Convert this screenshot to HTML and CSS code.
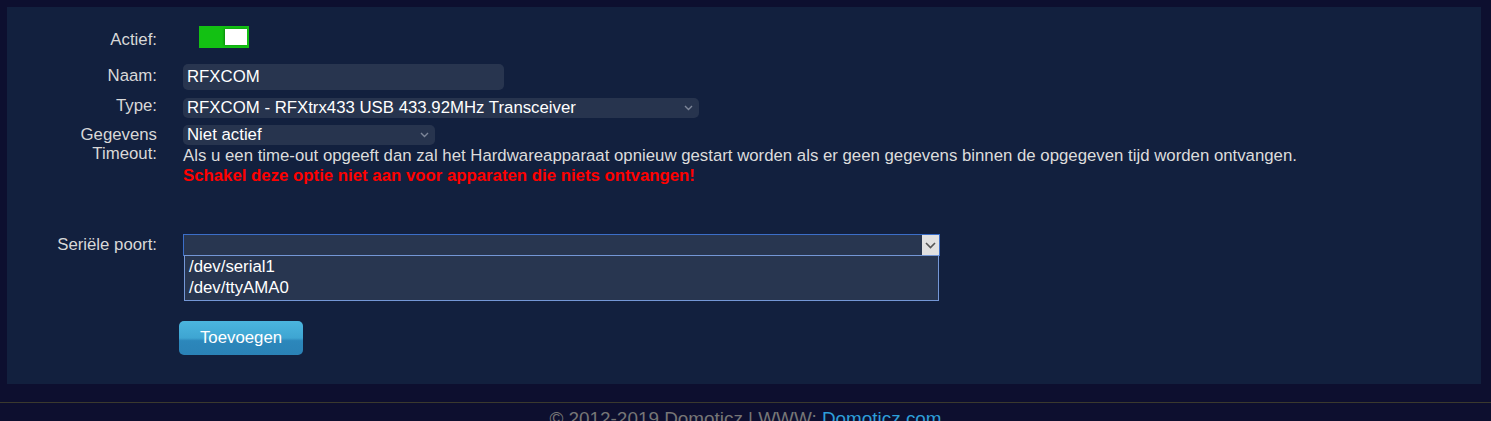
FILE: index.html
```html
<!DOCTYPE html>
<html lang="nl">
<head>
<meta charset="utf-8">
<title>Hardware</title>
<link rel="stylesheet" href="styles.css">
</head>
<body>
<div class="wrap">
  <div class="panel">
    <div class="row row-actief">
      <div class="label">Actief:</div>
      <div class="field"><span class="toggle"><span class="knob"></span></span></div>
    </div>
    <div class="row row-naam">
      <div class="label">Naam:</div>
      <div class="field"><div class="input input-naam">RFXCOM</div></div>
    </div>
    <div class="row row-type">
      <div class="label">Type:</div>
      <div class="field">
        <div class="select select-type"><span>RFXCOM - RFXtrx433 USB 433.92MHz Transceiver</span>
          <svg class="chev" width="9" height="6" viewBox="0 0 9 6"><path d="M1 1l3.5 3.5L8 1" fill="none" stroke="#7d8699" stroke-width="1.4"/></svg>
        </div>
      </div>
    </div>
    <div class="row row-timeout">
      <div class="label">Gegevens<br>Timeout:</div>
      <div class="field">
        <div class="select select-timeout"><span>Niet actief</span>
          <svg class="chev" width="9" height="6" viewBox="0 0 9 6"><path d="M1 1l3.5 3.5L8 1" fill="none" stroke="#7d8699" stroke-width="1.4"/></svg>
        </div>
        <p class="desc">Als u een time-out opgeeft dan zal het Hardwareapparaat opnieuw gestart worden als er geen gegevens binnen de opgegeven tijd worden ontvangen.</p>
        <p class="warn">Schakel deze optie niet aan voor apparaten die niets ontvangen!</p>
      </div>
    </div>
    <div class="row row-serial">
      <div class="label">Seriële poort:</div>
      <div class="field">
        <div class="serial">
          <div class="serial-box">
            <span class="serial-val"></span>
            <span class="serial-btn"><svg width="11" height="7" viewBox="0 0 11 7"><path d="M1 1l4.5 4.5L10 1" fill="none" stroke="#555" stroke-width="1.6"/></svg></span>
          </div>
          <ul class="listbox">
            <li>/dev/serial1</li>
            <li>/dev/ttyAMA0</li>
          </ul>
        </div>
        <button class="btn" type="button">Toevoegen</button>
      </div>
    </div>
  </div>
</div>
<footer class="footer">© 2012-2019 Domoticz | WWW: <a href="#">Domoticz.com</a></footer>
</body>
</html>
```

FILE: styles.css
```css
html, body {
  margin: 0;
  padding: 0;
}
body {
  background: #0d0f2f;
  font-family: "Liberation Sans", Arial, sans-serif;
  font-size: 16.8px;
  color: #dcdcdc;
  height: 421px;
  overflow: hidden;
}
.wrap {
  padding: 7px 10px 0 7px;
}
.panel {
  background: #12203e;
  height: 377px;
  box-sizing: border-box;
  padding-top: 19px;
}
.row {
  display: flex;
  gap: 26px;
}
.label {
  width: 150px;
  flex: none;
  text-align: right;
  color: #d8d8d8;
  line-height: 19px;
}
.field {
  flex: 1;
  min-width: 0;
}
.row-actief .label {
  padding-top: 4px;
}
.toggle {
  display: block;
  position: relative;
  margin-left: 16px;
  width: 50px;
  height: 22px;
  background: #13c113;
}
.knob {
  position: absolute;
  right: 2px;
  top: 3px;
  width: 22px;
  height: 16px;
  background: #fff;
  box-shadow: -1px 0 2px rgba(0, 60, 0, 0.45);
  box-sizing: border-box;
}
.row-naam {
  margin-top: 15px;
}
.row-naam .label {
  padding-top: 2px;
}
.input {
  background: #28354f;
  border-radius: 5px;
  color: #fff;
  box-sizing: border-box;
}
.input-naam {
  width: 321px;
  height: 26px;
  line-height: 26px;
  padding-left: 4px;
}
.row-type {
  margin-top: 8px;
}
.row-type .label {
  line-height: 16px;
}
.select {
  display: flex;
  align-items: center;
  justify-content: space-between;
  background: #27344e;
  border-radius: 5px;
  color: #fff;
  height: 20px;
  box-sizing: border-box;
  padding: 0 6px 0 4px;
}
.select span {
  line-height: 20px;
}
.select-type {
  width: 516px;
}
.select-timeout {
  width: 252px;
}
.chev {
  display: block;
  flex: none;
}
.row-timeout {
  margin-top: 7px;
}
.row-timeout .label {
  padding-top: 0;
  line-height: 19px;
}
.desc {
  margin: 1px 0 0 0;
  line-height: 20px;
  color: #dcdcdc;
}
.warn {
  margin: 0;
  line-height: 20px;
  color: #ff0000;
  font-weight: bold;
}
.row-serial {
  margin-top: 48px;
}
.row-serial .label {
  padding-top: 1px;
}
.serial {
  position: relative;
  width: 757px;
}
.serial-box {
  display: flex;
  height: 22px;
  box-sizing: border-box;
  border: 1px solid #3b6ec8;
  background: #283650;
}
.serial-val {
  flex: 1;
}
.serial-btn {
  width: 17px;
  flex: none;
  background: #e1e1e1;
  display: flex;
  align-items: center;
  justify-content: center;
}
.listbox {
  position: absolute;
  left: 1px;
  right: 1px;
  top: 21px;
  margin: 0;
  padding: 0 0 2px 0;
  list-style: none;
  background: #283650;
  border: 1px solid #7497d6;
  color: #fff;
  z-index: 2;
}
.listbox li {
  line-height: 21px;
  padding-left: 4px;
}
.btn {
  display: block;
  margin: 65px 0 0 -4px;
  width: 124px;
  height: 34px;
  border: none;
  border-radius: 5px;
  background: linear-gradient(#4bb5de 0%, #3ea5d2 50%, #2c87bb 58%, #2a82b6 100%);
  color: #fff;
  font-family: "Liberation Sans", Arial, sans-serif;
  font-size: 16.8px;
  padding: 0;
}
.footer {
  margin-top: 18px;
  border-top: 1px solid #3a392e;
  text-align: center;
  color: #767676;
  font-size: 18.9px;
  padding-top: 5px;
  line-height: 22px;
}
.footer a {
  color: #2d9fd9;
  text-decoration: none;
}
```
